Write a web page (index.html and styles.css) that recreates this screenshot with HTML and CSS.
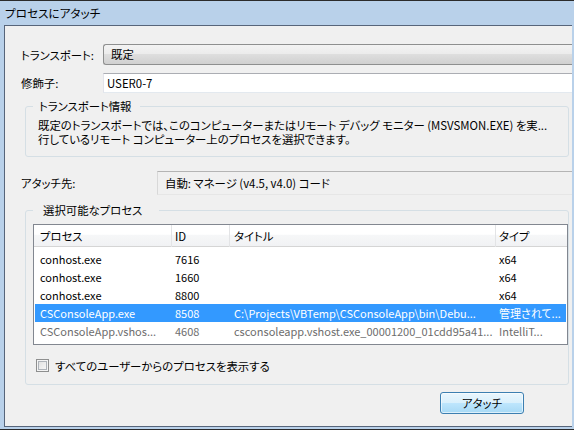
FILE: index.html
```html
<!DOCTYPE html>
<html lang="ja">
<head>
<meta charset="utf-8">
<title>プロセスにアタッチ</title>
<link rel="stylesheet" href="styles.css">
</head>
<body>
<div class="window">
  <div class="titlebar">プロセスにアタッチ</div>
  <div class="client">
    <div class="row row-transport">
      <span class="label">トランスポート:</span>
      <div class="combo">既定</div>
    </div>
    <div class="row row-qualifier">
      <span class="label">修飾子:</span>
      <div class="textbox">USER0-7</div>
    </div>
    <fieldset class="group group-info">
      <legend class="legend-info">トランスポート情報</legend>
      <p class="info">既定のトランスポートでは、このコンピューターまたはリモート デバッグ モニター (MSVSMON.EXE) を実...<br>行しているリモート コンピューター上のプロセスを選択できます。</p>
    </fieldset>
    <div class="row row-attach">
      <span class="label label-wide">アタッチ先:</span>
      <div class="readonly">自動: マネージ (v4.5, v4.0) コード</div>
    </div>
    <fieldset class="group group-proc">
      <legend class="legend-proc">選択可能なプロセス</legend>
      <div class="listview">
        <div class="lv-header">
          <span class="hc c1">プロセス</span>
          <span class="hc c2">ID</span>
          <span class="hc c3">タイトル</span>
          <span class="hc c4">タイプ</span>
        </div>
        <div class="lv-row">
          <span class="c1">conhost.exe</span><span class="c2">7616</span><span class="c3"></span><span class="c4">x64</span>
        </div>
        <div class="lv-row">
          <span class="c1">conhost.exe</span><span class="c2">1660</span><span class="c3"></span><span class="c4">x64</span>
        </div>
        <div class="lv-row">
          <span class="c1">conhost.exe</span><span class="c2">8800</span><span class="c3"></span><span class="c4">x64</span>
        </div>
        <div class="lv-row selected">
          <span class="c1">CSConsoleApp.exe</span><span class="c2">8508</span><span class="c3">C:\Projects\VBTemp\CSConsoleApp\bin\Debu...</span><span class="c4">管理されて...</span>
        </div>
        <div class="lv-row dim">
          <span class="c1">CSConsoleApp.vshos...</span><span class="c2">4608</span><span class="c3">csconsoleapp.vshost.exe_00001200_01cdd95a41...</span><span class="c4">IntelliT...</span>
        </div>
      </div>
      <label class="check-row"><span class="checkbox"></span><span>すべてのユーザーからのプロセスを表示する</span></label>
    </fieldset>
    <div class="buttons"><button class="btn" type="button">アタッチ</button></div>
  </div>
</div>
</body>
</html>
```

FILE: styles.css
```css
html, body {
  margin: 0;
  padding: 0;
  background: #ffffff;
}

body {
  font-family: "Noto Sans CJK JP", "Noto Sans", sans-serif;
  font-size: 11.4px;
  font-feature-settings: "palt";
  color: #000;
}

.window {
  width: 574px;
  height: 430px;
  box-sizing: border-box;
  background: #b9d1ea;
  border-top: 1px solid #2b2b2b;
  border-bottom: 1px solid #2b2b2b;
  padding: 0 2px 2px 4px;
  display: flex;
  flex-direction: column;
  overflow: hidden;
}

.titlebar {
  height: 24px;
  line-height: 25px;
  padding-left: 1px;
  font-size: 11.6px;
  white-space: nowrap;
}

.client {
  flex: 1;
  background: #f0f0f0;
  border: 1px solid #57657a;
  border-right: none;
  display: flex;
  flex-direction: column;
  min-height: 0;
}

.row {
  display: flex;
  align-items: center;
}

.label {
  box-sizing: border-box;
  width: 98px;
  padding-left: 16px;
  white-space: nowrap;
  flex: none;
}

.label-wide {
  width: 152px;
}

.row-transport {
  margin-top: 18px;
  height: 21px;
}

.combo {
  flex: 1;
  height: 21px;
  box-sizing: border-box;
  border: 1px solid #8e8f8f;
  border-right: none;
  border-radius: 3px 0 0 3px;
  background: linear-gradient(#f3f3f3, #ececec 45%, #dedede 50%, #d0d0d0);
  padding-left: 7px;
  line-height: 19px;
}

.row-qualifier {
  margin-top: 8px;
  height: 20px;
}

.textbox {
  flex: 1;
  height: 20px;
  box-sizing: border-box;
  background: #ffffff;
  border-top: 1px solid #abadb3;
  border-left: 1px solid #e2e3ea;
  border-bottom: 1px solid #e3e9ef;
  padding-left: 3px;
  line-height: 18px;
}

.group {
  border: 1px solid #d5dfe5;
  border-radius: 3px;
  margin: 0 3px 0 20px;
  padding: 0 0 10px 7px;
  min-width: 0;
}

.group-info {
  margin-top: 6px;
}

.legend-info {
  padding: 0 8px 0 6px;
  line-height: 14px;
}

.info {
  margin: 5px 0 0 5px;
  line-height: 14px;
  white-space: nowrap;
  overflow: hidden;
}

.row-attach {
  margin-top: 14px;
  height: 24px;
}

.readonly {
  flex: 1;
  height: 24px;
  box-sizing: border-box;
  border-top: 1px solid #b4b4b4;
  border-left: 1px solid #d8d8d8;
  border-bottom: 1px solid #e6e6e6;
  padding-left: 7px;
  line-height: 22px;
  white-space: nowrap;
}

.group-proc {
  margin-top: 8px;
  padding-bottom: 12px;
}

.legend-proc {
  padding: 0 17px 0 10px;
  line-height: 14px;
}

.listview {
  margin-top: 7px;
  height: 121px;
  box-sizing: border-box;
  border: 1px solid #828790;
  background: #ffffff;
  overflow: hidden;
}

.lv-header {
  display: grid;
  grid-template-columns: 138px 58px 266px 1fr;
  height: 22px;
  box-sizing: border-box;
  background: linear-gradient(#ffffff, #ffffff 45%, #f6f7f8 46%, #f1f2f4);
  border-bottom: 1px solid #d5d5d5;
  margin-bottom: 3px;
}

.hc {
  line-height: 22px;
  border-right: 1px solid #e3e4e6;
  white-space: nowrap;
}

.hc.c1 { padding-left: 6px; }
.hc.c2 { padding-left: 3px; }
.hc.c3 { padding-left: 4px; }
.hc.c4 { padding-left: 3px; border-right: none; }

.lv-row {
  display: grid;
  grid-template-columns: 137px 58px 266px 1fr;
  height: 18px;
  line-height: 19px;
  margin: 0 1px;
  white-space: nowrap;
  font-size: 11px;
}

.lv-row span {
  overflow: hidden;
}

.lv-row .c1 { padding-left: 5px; }
.lv-row .c2 { padding-left: 3px; }
.lv-row .c3 { padding-left: 4px; }
.lv-row .c4 { padding-left: 3px; }

.lv-row.selected {
  background: #3399ff;
  color: #ffffff;
}

.lv-row.dim {
  color: #6d6d6d;
}

.check-row {
  display: flex;
  align-items: center;
  margin-top: 14px;
  height: 13px;
  padding-left: 3px;
  white-space: nowrap;
}

.checkbox {
  width: 13px;
  height: 13px;
  box-sizing: border-box;
  border: 1px solid #8e8f8f;
  background: linear-gradient(135deg, #dcdcdc, #fbfbfb);
  box-shadow: inset 0 0 0 1px #f4f4f4, inset 0 0 0 2px #aeb3b9;
  margin-right: 6px;
  flex: none;
}

.buttons {
  display: flex;
  justify-content: flex-end;
  margin-top: 7px;
  padding-right: 48px;
}

.btn {
  width: 84px;
  height: 22px;
  box-sizing: border-box;
  border: 1px solid #3c7fb1;
  border-radius: 3px;
  background: linear-gradient(#eaf6fd, #d9f0fc 50%, #bee6fd 50%, #a7d9f5);
  box-shadow: inset 0 0 0 1px rgba(255, 255, 255, 0.6);
  font: inherit;
  color: #000;
  padding: 0;
  line-height: 20px;
}
```
